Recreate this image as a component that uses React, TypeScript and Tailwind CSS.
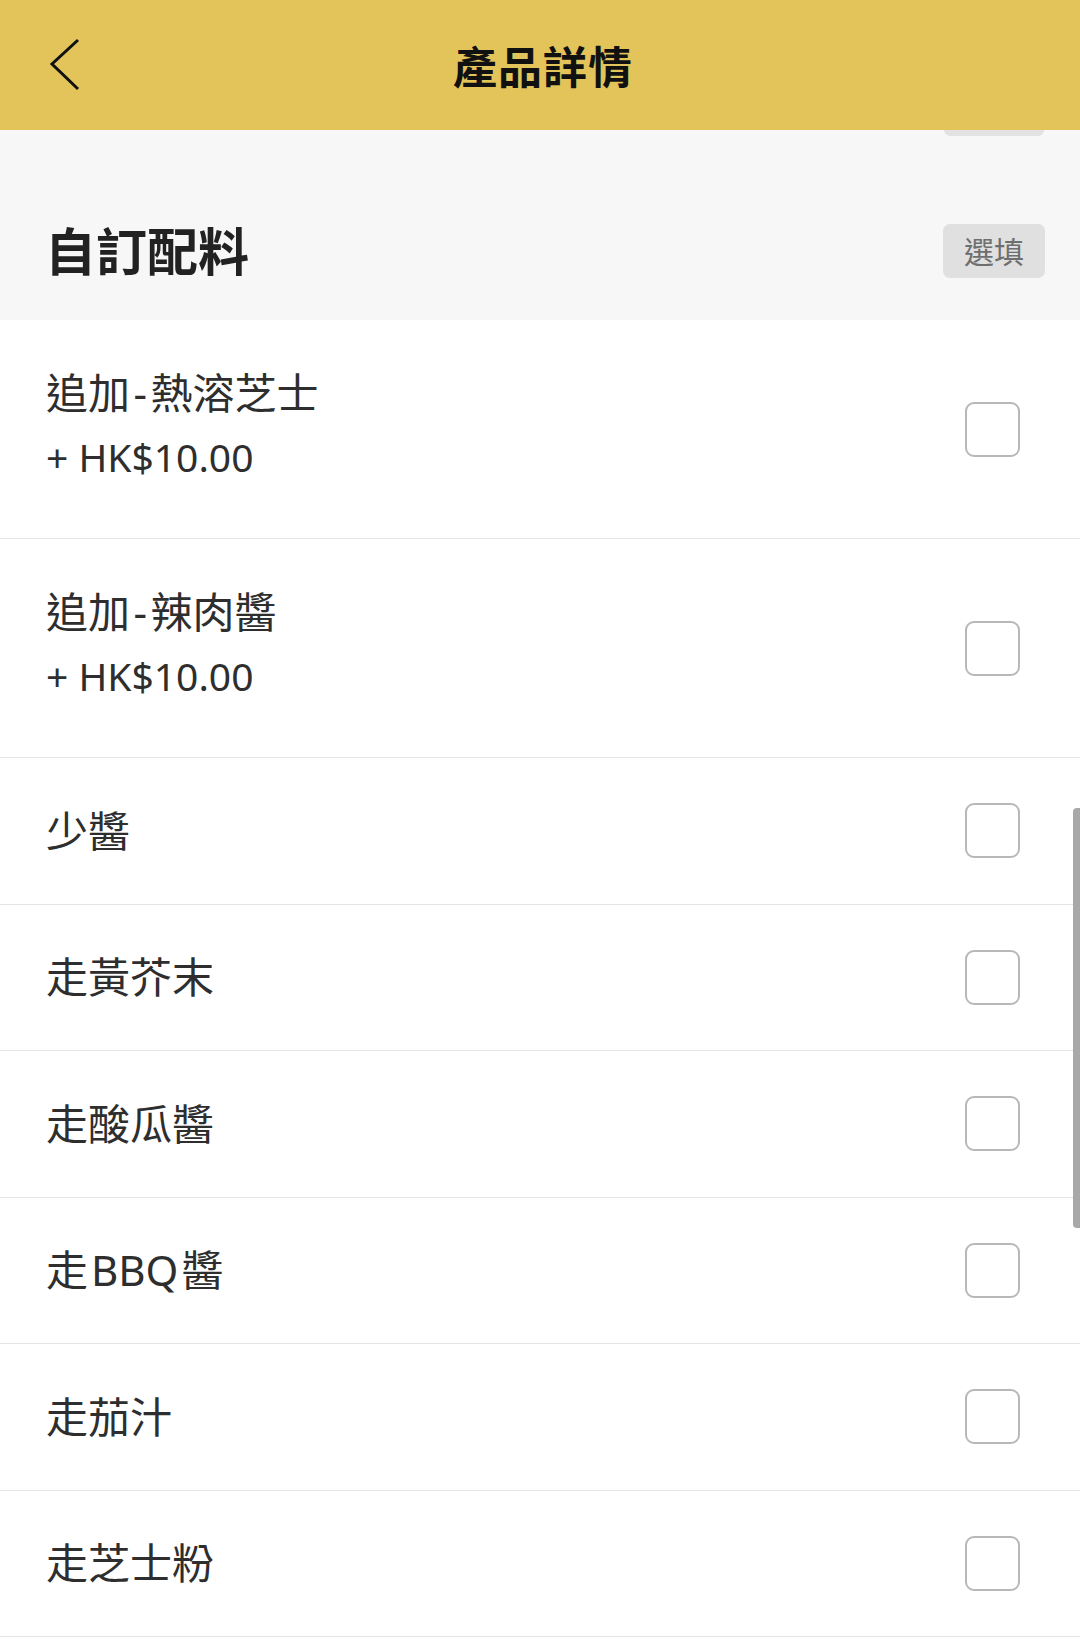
import React from 'react';

type Option = {
  name: React.ReactNode;
  key: string;
  price?: string;
};

const Dash = () => <span className="px-[3.5px]">-</span>;

const options: Option[] = [
  { key: 'cheese', name: <>追加<Dash />熱溶芝士</>, price: '+ HK$10.00' },
  { key: 'meat', name: <>追加<Dash />辣肉醬</>, price: '+ HK$10.00' },
  { key: 'less', name: '少醬' },
  { key: 'mustard', name: '走黃芥末' },
  { key: 'pickle', name: '走酸瓜醬' },
  { key: 'bbq', name: <>走<span className="px-[3px]">BBQ</span>醬</> },
  { key: 'ketchup', name: '走茄汁' },
  { key: 'powder', name: '走芝士粉' },
];

const font = { fontFamily: '"Noto Sans", "Noto Sans CJK TC", sans-serif' };

const Checkbox = () => (
  <div className="w-[55px] h-[55px] shrink-0 rounded-[9px] border-2 border-[#b8b8b8] bg-white" />
);

const OptionRow = ({ option }: { option: Option }) => {
  if (option.price) {
    return (
      <div className="h-[219px] flex items-center justify-between pl-[46px] pr-[60px] border-b border-[#e4e4e4]">
        <div className="flex flex-col -mt-[8px]">
          <div className="text-[42px] leading-[64px] text-[#2e2e2e]">{option.name}</div>
          <div className="text-[39px] leading-[64px] text-[#2e2e2e]">{option.price}</div>
        </div>
        <Checkbox />
      </div>
    );
  }

  return (
    <div className="h-[146.5px] flex items-center justify-between pl-[46px] pr-[60px] border-b border-[#e4e4e4]">
      <div className="text-[42px] leading-[60px] text-[#2e2e2e]">{option.name}</div>
      <Checkbox />
    </div>
  );
};

const App = () => {
  return (
    <div className="relative w-[1080px] h-[1642px] overflow-hidden bg-white" style={font}>
      {/* top bar */}
      <div className="h-[130px] bg-[#e2c45a] grid grid-cols-[1fr_auto_1fr] items-center">
        <div className="pl-[48px] flex items-center">
          <svg width="34" height="54" viewBox="0 0 34 54" fill="none">
            <path d="M30 2 L4 26 L30 51" stroke="#111" strokeWidth="3" strokeLinejoin="miter" />
          </svg>
        </div>
        <div className="pl-[6px] pt-[4px] text-[44px] font-bold text-[#111] tracking-[1px]">產品詳情</div>
        <div />
      </div>

      {/* section header */}
      <div className="h-[190px] bg-[#f7f7f7] flex flex-col">
        <div className="h-[6px] flex justify-end pr-[36px]">
          <div className="w-[100px] h-[6px] rounded-b-[6px] bg-[#e2e2e2]" />
        </div>
        <div className="mt-[88px] h-[54px] flex items-center justify-between pl-[45px] pr-[35px]">
          <div className="text-[51px] font-bold text-[#222]">自訂配料</div>
          <div className="w-[102px] h-[54px] rounded-[7px] bg-[#e0e0e0] flex items-center justify-center text-[30px] text-[#6e6e6e]">
            選填
          </div>
        </div>
      </div>

      {/* options */}
      <div className="flex flex-col">
        {options.map((option) => (
          <OptionRow key={option.key} option={option} />
        ))}
      </div>

      {/* scroll indicator */}
      <div className="absolute right-0 top-[808px] w-[7px] h-[420px] rounded-l-[4px] bg-[#a8a8a8]" />
    </div>
  );
};

export default App;
